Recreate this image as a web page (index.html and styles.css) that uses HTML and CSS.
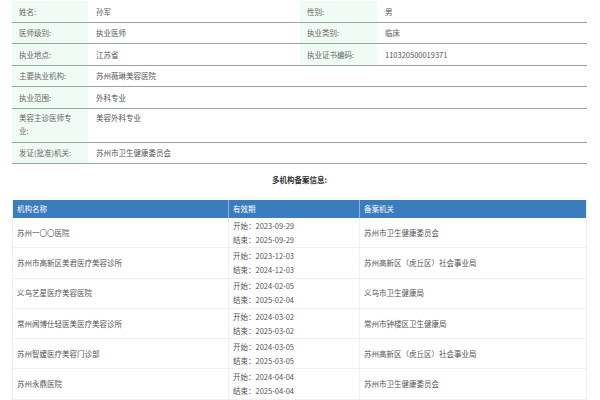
FILE: index.html
```html
<!DOCTYPE html>
<html lang="zh">
<head>
<meta charset="utf-8">
<link rel="stylesheet" href="styles.css">
</head>
<body>
<div class="page">
  <div class="info">
    <div class="row">
      <div class="lab">姓名:</div><div class="val">孙军</div>
      <div class="lab">性别:</div><div class="val">男</div>
    </div>
    <div class="row">
      <div class="lab">医师级别:</div><div class="val">执业医师</div>
      <div class="lab">执业类别:</div><div class="val">临床</div>
    </div>
    <div class="row">
      <div class="lab">执业地点:</div><div class="val">江苏省</div>
      <div class="lab">执业证书编码:</div><div class="val">110320500019371</div>
    </div>
    <div class="row">
      <div class="lab">主要执业机构:</div><div class="val wide">苏州薇琳美容医院</div>
    </div>
    <div class="row">
      <div class="lab">执业范围:</div><div class="val wide">外科专业</div>
    </div>
    <div class="row tall">
      <div class="lab">美容主诊医师专业:</div><div class="val wide">美容外科专业</div>
    </div>
    <div class="row">
      <div class="lab">发证(批准)机关:</div><div class="val wide">苏州市卫生健康委员会</div>
    </div>
  </div>

  <div class="title">多机构备案信息:</div>

  <div class="records">
    <div class="rec head">
      <div>机构名称</div><div>有效期</div><div>备案机关</div>
    </div>
    <div class="rec">
      <div>苏州一〇〇医院</div><div>开始：2023-09-29<br>结束：2025-09-29</div><div>苏州市卫生健康委员会</div>
    </div>
    <div class="rec">
      <div>苏州市高新区美君医疗美容诊所</div><div>开始：2023-12-03<br>结束：2024-12-03</div><div>苏州高新区（虎丘区）社会事业局</div>
    </div>
    <div class="rec">
      <div>义乌艺星医疗美容医院</div><div>开始：2024-02-05<br>结束：2025-02-04</div><div>义乌市卫生健康局</div>
    </div>
    <div class="rec">
      <div>常州闻博仕轻医美医疗美容诊所</div><div>开始：2024-03-02<br>结束：2025-03-02</div><div>常州市钟楼区卫生健康局</div>
    </div>
    <div class="rec">
      <div>苏州智媛医疗美容门诊部</div><div>开始：2024-03-05<br>结束：2025-03-05</div><div>苏州高新区（虎丘区）社会事业局</div>
    </div>
    <div class="rec">
      <div>苏州永鼎医院</div><div>开始：2024-04-04<br>结束：2025-04-04</div><div>苏州市卫生健康委员会</div>
    </div>
  </div>
</div>
</body>
</html>
```

FILE: styles.css
```css
html, body {
  margin: 0;
  padding: 0;
  background: #ffffff;
}
body {
  font-family: "Noto Sans CJK SC", "Noto Sans", sans-serif;
  font-size: 7.5px;
  color: #555;
}
.page {
  width: 575px;
  margin-left: 12px;
  padding-top: 1px;
}
.info .row {
  display: grid;
  grid-template-columns: 76px 212px 77px 210px;
  height: 21.5px;
  box-sizing: border-box;
  border-bottom: 1px solid #97a59f;
}
.info .row.tall {
  height: 34px;
}
.info .lab {
  background: #f1fbf6;
  color: #666;
  padding: 0 7px;
  display: flex;
  align-items: center;
  line-height: 13px;
}
.info .val {
  padding: 0 8px;
  display: flex;
  align-items: center;
  line-height: 13px;
  color: #555;
}
.info .row.tall .lab,
.info .row.tall .val {
  align-items: flex-start;
  padding-top: 2px;
}
.info .val.wide {
  grid-column: 2 / 5;
}
.title {
  height: 34px;
  display: flex;
  align-items: center;
  justify-content: center;
  font-weight: bold;
  color: #333;
  padding-bottom: 2px;
  box-sizing: border-box;
  border-bottom: 1px solid #f6f6f0;
}
.records {
  margin-top: 2px;
  border-left: 1px solid #f0f0f0;
  border-right: 1px solid #f0f0f0;
}
.rec {
  display: grid;
  grid-template-columns: 215px 131px 229px;
  height: 30.3px;
  box-sizing: border-box;
  border-bottom: 1px solid #f0f0f0;
}
.rec > div {
  display: flex;
  align-items: center;
  padding-left: 4px;
  line-height: 14px;
  border-left: 1px solid #f0f0f0;
}
.rec > div:first-child {
  border-left: none;
}
.rec.head {
  height: 18px;
  background: #3b7cbf;
  color: #fff;
  border-bottom: none;
}
.rec.head > div {
  border-left: 1px solid #8db3dc;
}
.rec.head > div:first-child {
  border-left: none;
}
```
